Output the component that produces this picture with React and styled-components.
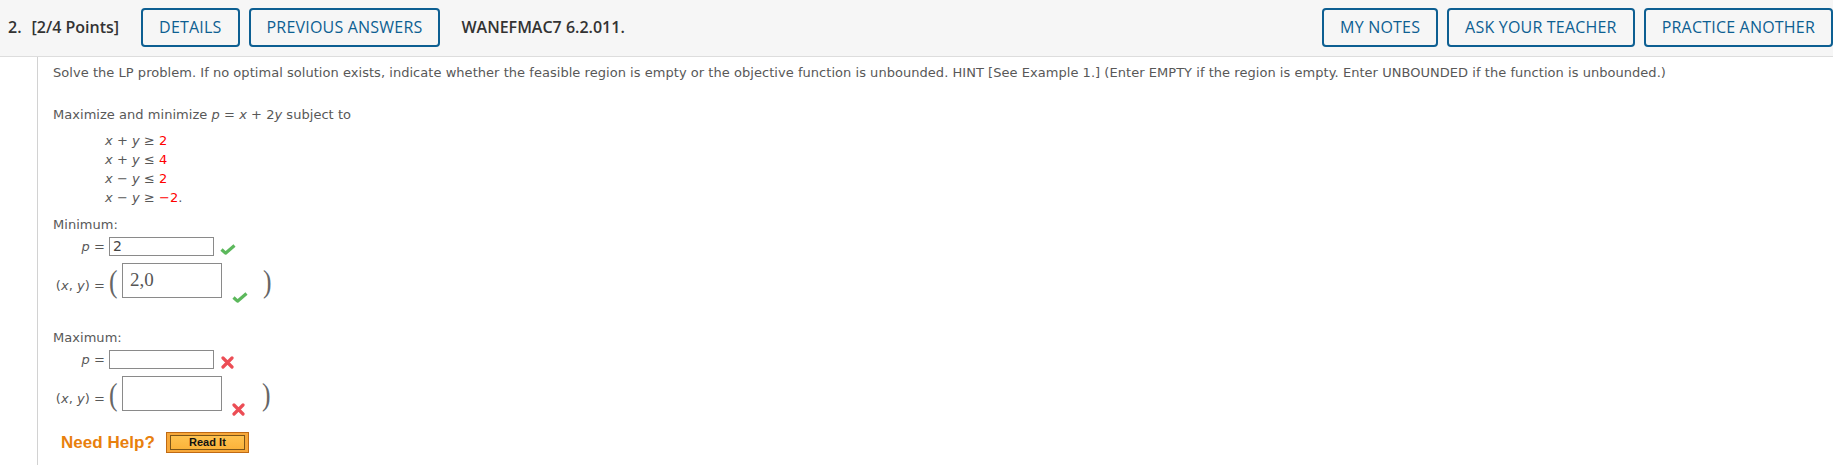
import React from "react";
import styled, { createGlobalStyle } from "styled-components";

const GlobalStyle = createGlobalStyle`
  body {
    margin: 0;
    background: #fff;
    overflow: hidden;
  }
`;

const CheckIcon = () => (
  <svg width="16" height="11" viewBox="0 0 16 11">
    <path d="M1.5 5.5 L5.5 9.2 L14.5 1.5" fill="none" stroke="#5cb85c" strokeWidth="3.2" strokeLinejoin="round" />
  </svg>
);

const CrossIcon = () => (
  <svg width="13" height="13" viewBox="0 0 13 13">
    <path d="M2 2 L11 11 M11 2 L2 11" fill="none" stroke="#ec4d55" strokeWidth="3.2" strokeLinecap="round" />
  </svg>
);

const App = () => {
  return (
    <>
      <GlobalStyle />
      <Header>
        <QNum>2.</QNum>
        <Points>[2/4 Points]</Points>
        <HeadButton>DETAILS</HeadButton>
        <HeadButton>PREVIOUS ANSWERS</HeadButton>
        <Code>WANEFMAC7 6.2.011.</Code>
        <RightGroup>
          <HeadButton>MY NOTES</HeadButton>
          <HeadButton>ASK YOUR TEACHER</HeadButton>
          <HeadButton>PRACTICE ANOTHER</HeadButton>
        </RightGroup>
      </Header>

      <Body>
        <Line>
          Solve the LP problem. If no optimal solution exists, indicate whether the feasible region is empty or the
          objective function is unbounded. HINT [See Example 1.] (Enter EMPTY if the region is empty. Enter UNBOUNDED
          if the function is unbounded.)
        </Line>
        <Line $top={26}>
          Maximize and minimize <V>p</V> = <V>x</V> + 2<V>y</V> subject to
        </Line>
        <Constraints>
          <div><V>x</V> + <V>y</V> ≥ <Red>2</Red></div>
          <div><V>x</V> + <V>y</V> ≤ <Red>4</Red></div>
          <div><V>x</V> − <V>y</V> ≤ <Red>2</Red></div>
          <div><V>x</V> − <V>y</V> ≥ <Red>−2</Red>.</div>
        </Constraints>

        <Line $top={10}>Minimum:</Line>
        <PRow>
          <Label><V>p</V> =</Label>
          <SmallBox>2</SmallBox>
          <Mark $ok><CheckIcon /></Mark>
        </PRow>
        <PairRow>
          <PairLabel>(<V>x</V>, <V>y</V>) =</PairLabel>
          <Paren>(</Paren>
          <BigBox>2,0</BigBox>
          <PairMark><CheckIcon /></PairMark>
          <Paren $close>)</Paren>
        </PairRow>

        <Line $top={32}>Maximum:</Line>
        <PRow>
          <Label><V>p</V> =</Label>
          <SmallBox />
          <Mark><CrossIcon /></Mark>
        </PRow>
        <PairRow>
          <PairLabel>(<V>x</V>, <V>y</V>) =</PairLabel>
          <Paren>(</Paren>
          <BigBox />
          <PairMark $cross><CrossIcon /></PairMark>
          <Paren $close>)</Paren>
        </PairRow>

        <HelpRow>
          <NeedHelp>Need Help?</NeedHelp>
          <ReadIt>
            <ReadInner>Read It</ReadInner>
          </ReadIt>
        </HelpRow>
      </Body>
    </>
  );
};

export default App;

const Header = styled.div`
  display: flex;
  align-items: center;
  height: 57px;
  box-sizing: border-box;
  padding: 0 0 2px 8px;
  background: #f6f6f6;
  border-bottom: 1px solid #dddddd;
  font-family: "Open Sans", sans-serif;
  font-size: 16px;
`;

const QNum = styled.span`
  font-weight: 600;
  color: #333;
  margin-right: 10px;
`;

const Points = styled.span`
  font-weight: 600;
  color: #333;
  margin-right: 22px;
`;

const Code = styled.span`
  font-weight: 600;
  color: #333;
  margin-left: 12px;
`;

const RightGroup = styled.div`
  margin-left: auto;
  display: flex;
  gap: 9px;
`;

const HeadButton = styled.button`
  height: 39px;
  padding: 0 16px;
  margin-right: 9px;
  border: 2px solid #0d5f92;
  border-radius: 4px;
  background: transparent;
  color: #0d5f92;
  font-family: "Open Sans", sans-serif;
  font-size: 16px;
  letter-spacing: 0.2px;
  white-space: nowrap;
  cursor: pointer;

  ${RightGroup} & {
    margin-right: 0;
  }
`;

const Body = styled.div`
  margin-left: 37px;
  min-height: calc(100vh - 57px);
  box-sizing: border-box;
  border-left: 1px solid #d2d2d2;
  padding: 8px 0 6px 15px;
  font-family: Verdana, "DejaVu Sans", sans-serif;
  font-size: 13px;
  letter-spacing: 0.04px;
  color: #585858;
`;

const Line = styled.div`
  line-height: 16px;
  margin-top: ${(p) => p.$top || 0}px;
  white-space: nowrap;
`;

const V = styled.i`
  font-style: italic;
`;

const Red = styled.span`
  color: #ff0000;
`;

const Constraints = styled.div`
  margin: 8px 0 0 52px;
  line-height: 19px;
`;

const PRow = styled.div`
  display: flex;
  align-items: center;
  margin-top: 4px;
`;

const Label = styled.div`
  width: 52px;
  text-align: right;
  margin-right: 4px;
  line-height: 16px;
`;

const SmallBox = styled.div`
  width: 105px;
  height: 19px;
  box-sizing: border-box;
  border: 1px solid #8a8a8a;
  padding: 0 3px;
  font-family: Verdana, "DejaVu Sans", sans-serif;
  font-size: 14px;
  line-height: 17px;
  color: #444;
`;

const Mark = styled.div`
  display: flex;
  margin: 6px 0 0 ${(p) => (p.$ok ? 6 : 7)}px;
`;

const PairRow = styled.div`
  display: flex;
  align-items: flex-end;
  margin-top: 7px;
`;

const PairLabel = styled.div`
  width: 52px;
  text-align: right;
  margin: 0 3px 4px 0;
  line-height: 16px;
  white-space: nowrap;
`;

const Paren = styled.div`
  width: 9px;
  height: 28px;
  margin: 0 ${(p) => (p.$close ? 0 : 5)}px 2px 0;
  font-family: "Liberation Serif", serif;
  font-size: 32px;
  line-height: 26px;
  color: #666;
  font-weight: 300;
  transform: scaleX(0.8);
`;

const BigBox = styled.div`
  width: 100px;
  height: 35px;
  box-sizing: border-box;
  border: 1px solid #8a8a8a;
  padding: 0 7px;
  font-family: "Liberation Serif", serif;
  font-size: 19px;
  line-height: 32px;
  color: #555;
`;

const PairMark = styled.div`
  display: flex;
  margin: 0 ${(p) => (p.$cross ? 16 : 14)}px -5px 10px;
`;

const HelpRow = styled.div`
  display: flex;
  align-items: center;
  margin: 21px 0 0 8px;
`;

const NeedHelp = styled.span`
  font-family: "Liberation Sans", Arial, sans-serif;
  font-weight: bold;
  font-size: 17px;
  color: #e8800d;
  margin-right: 11px;
`;

const ReadIt = styled.div`
  width: 83px;
  height: 21px;
  box-sizing: border-box;
  padding: 2px 3px;
  background: #f7a83a;
  border: 1px solid #c06a14;
`;

const ReadInner = styled.div`
  height: 100%;
  box-sizing: border-box;
  border: 1px solid #7c5518;
  background: linear-gradient(#fec24f, #fbb33a);
  font-family: "Liberation Sans", Arial, sans-serif;
  font-weight: bold;
  font-size: 11px;
  line-height: 13px;
  text-align: center;
  color: #111;
`;
